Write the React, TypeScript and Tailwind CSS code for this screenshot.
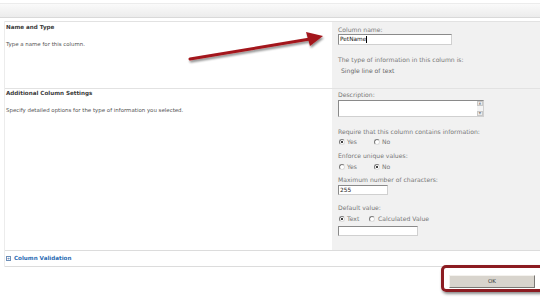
import React from "react";

function Radio({ checked }: { checked?: boolean }) {
  return (
    <span className="relative inline-block w-[6px] h-[6px] rounded-full bg-white border border-t-[#7a7a7a] border-l-[#7a7a7a] border-r-[#dcdcdc] border-b-[#dcdcdc] align-middle">
      {checked && <span className="absolute left-[1px] top-[1px] w-[2px] h-[2px] rounded-full bg-black" />}
    </span>
  );
}

export default function App() {
  return (
    <div
      className="relative w-[540px] h-[303px] overflow-hidden bg-white text-[#555]"
      style={{ fontFamily: '"DejaVu Sans", Verdana, sans-serif' }}
    >
      {/* top band */}
      <div className="h-[4px] bg-white border-b border-[#ececec]" />
      <div className="h-[14px] bg-gradient-to-b from-[#fafafa] to-[#ececec] border-b border-[#d9d9d9]" />
      <div className="h-[3px]" />

      {/* form table */}
      <div className="ml-[4px] border-l border-[#ececec]">
        {/* Section 1 */}
        <div className="flex h-[67px] border-t border-[#e2e2e2]">
          <div className="w-[327px] pl-[1px]">
            <div className="pt-[1px] text-[5.6px] leading-[8px] font-bold text-[#3a3a3a]">Name and Type</div>
            <div className="mt-[9px] text-[5.45px] leading-[8px] text-[#555]">Type a name for this column.</div>
          </div>
          <div className="flex-1 bg-[#f1f1f1] pl-[6px] pt-[4px] text-[6.1px] text-[#777]">
            <div className="leading-[8px]">Column name:</div>
            <div className="w-[114px] h-[11px] bg-white border border-t-[#8a8a8a] border-l-[#8a8a8a] border-r-[#d0d0d0] border-b-[#d0d0d0] text-[5.8px] leading-[9px] pl-[1px] text-[#222]">
              PetName<span className="inline-block w-[0.5px] h-[7px] bg-black align-middle" />
            </div>
            <div className="mt-[11px] leading-[8px]">The type of information in this column is:</div>
            <div className="mt-[3px] pl-[3px] leading-[8px] text-[#666]">Single line of text</div>
          </div>
        </div>

        {/* Section 2 */}
        <div className="flex h-[162px] border-t border-[#e2e2e2]">
          <div className="w-[327px] pl-[1px]">
            <div className="text-[5.6px] leading-[8px] font-bold text-[#3a3a3a]">Additional Column Settings</div>
            <div className="mt-[9px] text-[5.45px] leading-[8px] text-[#555]">
              Specify detailed options for the type of information you selected.
            </div>
          </div>
          <div className="flex-1 bg-[#f1f1f1] pl-[6px] pt-[2px] text-[6.1px] text-[#777]">
            <div className="leading-[8px]">Description:</div>
            <div className="mt-[1px] flex w-[146px] h-[17px] bg-white border border-t-[#8a8a8a] border-l-[#8a8a8a] border-r-[#d0d0d0] border-b-[#d0d0d0]">
              <div className="flex-1" />
              <div className="w-[6px] flex flex-col justify-between bg-[#f4f4f4]">
                <div className="h-[5px] border border-[#c8c8c8] bg-[#ececec] flex items-center justify-center text-[3px] leading-none text-[#888]">▲</div>
                <div className="h-[5px] border border-[#c8c8c8] bg-[#ececec] flex items-center justify-center text-[3px] leading-none text-[#888]">▼</div>
              </div>
            </div>
            <div className="mt-[11px] leading-[8px]">Require that this column contains information:</div>
            <div className="mt-[2px] h-[8px] flex items-center pl-[1px]">
              <Radio checked />
              <span className="ml-[2px] w-[27px]">Yes</span>
              <Radio />
              <span className="ml-[2px]">No</span>
            </div>
            <div className="mt-[6px] leading-[8px]">Enforce unique values:</div>
            <div className="mt-[3px] h-[8px] flex items-center pl-[1px]">
              <Radio />
              <span className="ml-[2px] w-[27px]">Yes</span>
              <Radio checked />
              <span className="ml-[2px]">No</span>
            </div>
            <div className="mt-[5px] leading-[8px]">Maximum number of characters:</div>
            <div className="mt-[1px] w-[50px] h-[10px] bg-white border border-t-[#8a8a8a] border-l-[#8a8a8a] border-r-[#d0d0d0] border-b-[#d0d0d0] text-[5.8px] leading-[8px] pl-[1px] text-[#222]">
              255
            </div>
            <div className="mt-[9px] leading-[8px]">Default value:</div>
            <div className="mt-[3px] h-[8px] flex items-center pl-[1px]">
              <Radio checked />
              <span className="ml-[2px] w-[22px]">Text</span>
              <Radio />
              <span className="ml-[3px]">Calculated Value</span>
            </div>
            <div className="mt-[3px] w-[80px] h-[10px] bg-white border border-t-[#8a8a8a] border-l-[#8a8a8a] border-r-[#d0d0d0] border-b-[#d0d0d0]" />
          </div>
        </div>

        {/* Column validation */}
        <div className="flex items-center h-[17px] border-t border-b border-[#dcdcdc]">
          <span className="ml-[1px] w-[5px] h-[5px] border border-[#6d8fb8] flex items-center justify-center text-[4px] leading-none text-[#3a6aa8]">+</span>
          <span className="ml-[3px] text-[5.6px] font-bold text-[#2a6bb3]">Column Validation</span>
        </div>
      </div>

      {/* OK button row */}
      <div className="flex justify-end pr-[5px] mt-[8px]">
        <div className="w-[86px] h-[13px] bg-[#d8d4cd] border border-t-[#f4f2ee] border-l-[#f4f2ee] border-r-[#7a7874] border-b-[#7a7874] flex items-center justify-center text-[5.5px] text-[#333]">
          OK
        </div>
      </div>

      {/* red highlight */}
      <div className="absolute left-[441px] top-[265px] w-[104px] h-[27px] rounded-[5px] border-[3px] border-[#8c1c22] shadow-[1px_2px_3px_rgba(0,0,0,0.45)]" />

      {/* arrow */}
      <svg className="absolute left-0 top-0" width="540" height="303" viewBox="0 0 540 303">
        <defs>
          <filter id="sh" x="-20%" y="-50%" width="140%" height="200%">
            <feGaussianBlur in="SourceAlpha" stdDeviation="1" />
            <feOffset dx="1" dy="2" result="o" />
            <feComponentTransfer>
              <feFuncA type="linear" slope="0.45" />
            </feComponentTransfer>
            <feMerge>
              <feMergeNode />
              <feMergeNode in="SourceGraphic" />
            </feMerge>
          </filter>
        </defs>
        <g filter="url(#sh)">
          <line x1="190" y1="59" x2="310" y2="39" stroke="#a3161c" strokeWidth="3" strokeLinecap="round" />
          <polygon points="323,36 306,32 310,46" fill="#a3161c" />
        </g>
      </svg>
    </div>
  );
}
